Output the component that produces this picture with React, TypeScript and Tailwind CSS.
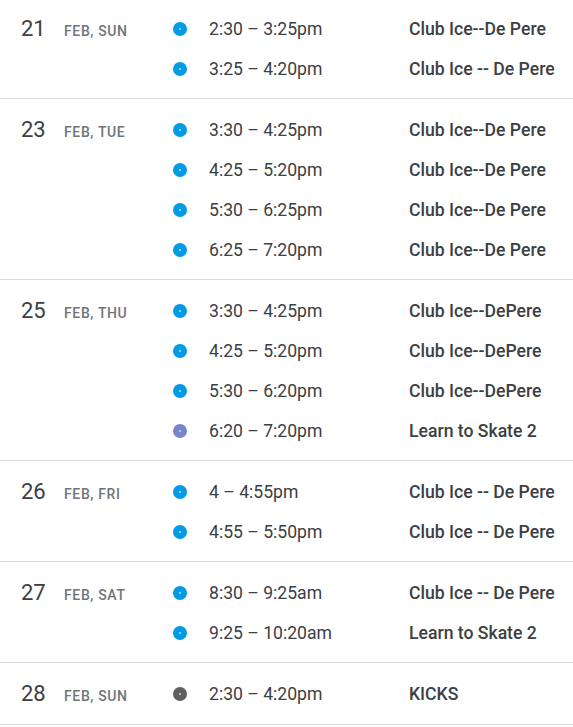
const days = [
  {
    num: '21',
    label: 'Feb, Sun',
    events: [
      { time: '2:30 – 3:25pm', title: 'Club Ice--De Pere', color: 'bg-[#039be5]' },
      { time: '3:25 – 4:20pm', title: 'Club Ice -- De Pere', color: 'bg-[#039be5]' },
    ],
  },
  {
    num: '23',
    label: 'Feb, Tue',
    events: [
      { time: '3:30 – 4:25pm', title: 'Club Ice--De Pere', color: 'bg-[#039be5]' },
      { time: '4:25 – 5:20pm', title: 'Club Ice--De Pere', color: 'bg-[#039be5]' },
      { time: '5:30 – 6:25pm', title: 'Club Ice--De Pere', color: 'bg-[#039be5]' },
      { time: '6:25 – 7:20pm', title: 'Club Ice--De Pere', color: 'bg-[#039be5]' },
    ],
  },
  {
    num: '25',
    label: 'Feb, Thu',
    events: [
      { time: '3:30 – 4:25pm', title: 'Club Ice--DePere', color: 'bg-[#039be5]' },
      { time: '4:25 – 5:20pm', title: 'Club Ice--DePere', color: 'bg-[#039be5]' },
      { time: '5:30 – 6:20pm', title: 'Club Ice--DePere', color: 'bg-[#039be5]' },
      { time: '6:20 – 7:20pm', title: 'Learn to Skate 2', color: 'bg-[#7986cb]' },
    ],
  },
  {
    num: '26',
    label: 'Feb, Fri',
    events: [
      { time: '4 – 4:55pm', title: 'Club Ice -- De Pere', color: 'bg-[#039be5]' },
      { time: '4:55 – 5:50pm', title: 'Club Ice -- De Pere', color: 'bg-[#039be5]' },
    ],
  },
  {
    num: '27',
    label: 'Feb, Sat',
    events: [
      { time: '8:30 – 9:25am', title: 'Club Ice -- De Pere', color: 'bg-[#039be5]' },
      { time: '9:25 – 10:20am', title: 'Learn to Skate 2', color: 'bg-[#039be5]' },
    ],
  },
  {
    num: '28',
    label: 'Feb, Sun',
    events: [{ time: '2:30 – 4:20pm', title: 'KICKS', color: 'bg-[#616161]' }],
  },
]

export default function App() {
  return (
    <div className="min-h-[727px] bg-white text-[#3c4043] font-['Roboto',sans-serif]">
      {days.map((day, i) => (
        <div
          key={day.num}
          className={`flex border-b border-[#dadce0] pl-[21px] ${i === 0 ? 'pt-[8px]' : 'pt-[10px]'} ${i === days.length - 1 ? 'pb-[11px]' : 'pb-[10px]'}`}
        >
          <div className="flex h-10 w-[152px] shrink-0 items-baseline pt-[7px]">
            <span className="w-[43px] text-[22px] leading-7">{day.num}</span>
            <span className="text-[14px] font-medium uppercase tracking-[0.045em] text-[#70757a]">
              {day.label}
            </span>
          </div>
          <div className="flex flex-col">
            {day.events.map((ev, j) => (
              <div key={j} className="flex h-10 items-center">
                <span className={`relative mt-[2px] h-[14px] w-[14px] shrink-0 rounded-full ${ev.color}`}>
                  <span className="absolute left-[6px] top-[6px] h-[2px] w-[2px] rounded-full bg-white/70" />
                </span>
                <span className="ml-[22px] w-[200px] shrink-0 pt-[3px] text-[17.6px]">{ev.time}</span>
                <span className="pt-[3px] text-[17.6px] font-medium">{ev.title}</span>
              </div>
            ))}
          </div>
        </div>
      ))}
    </div>
  )
}
